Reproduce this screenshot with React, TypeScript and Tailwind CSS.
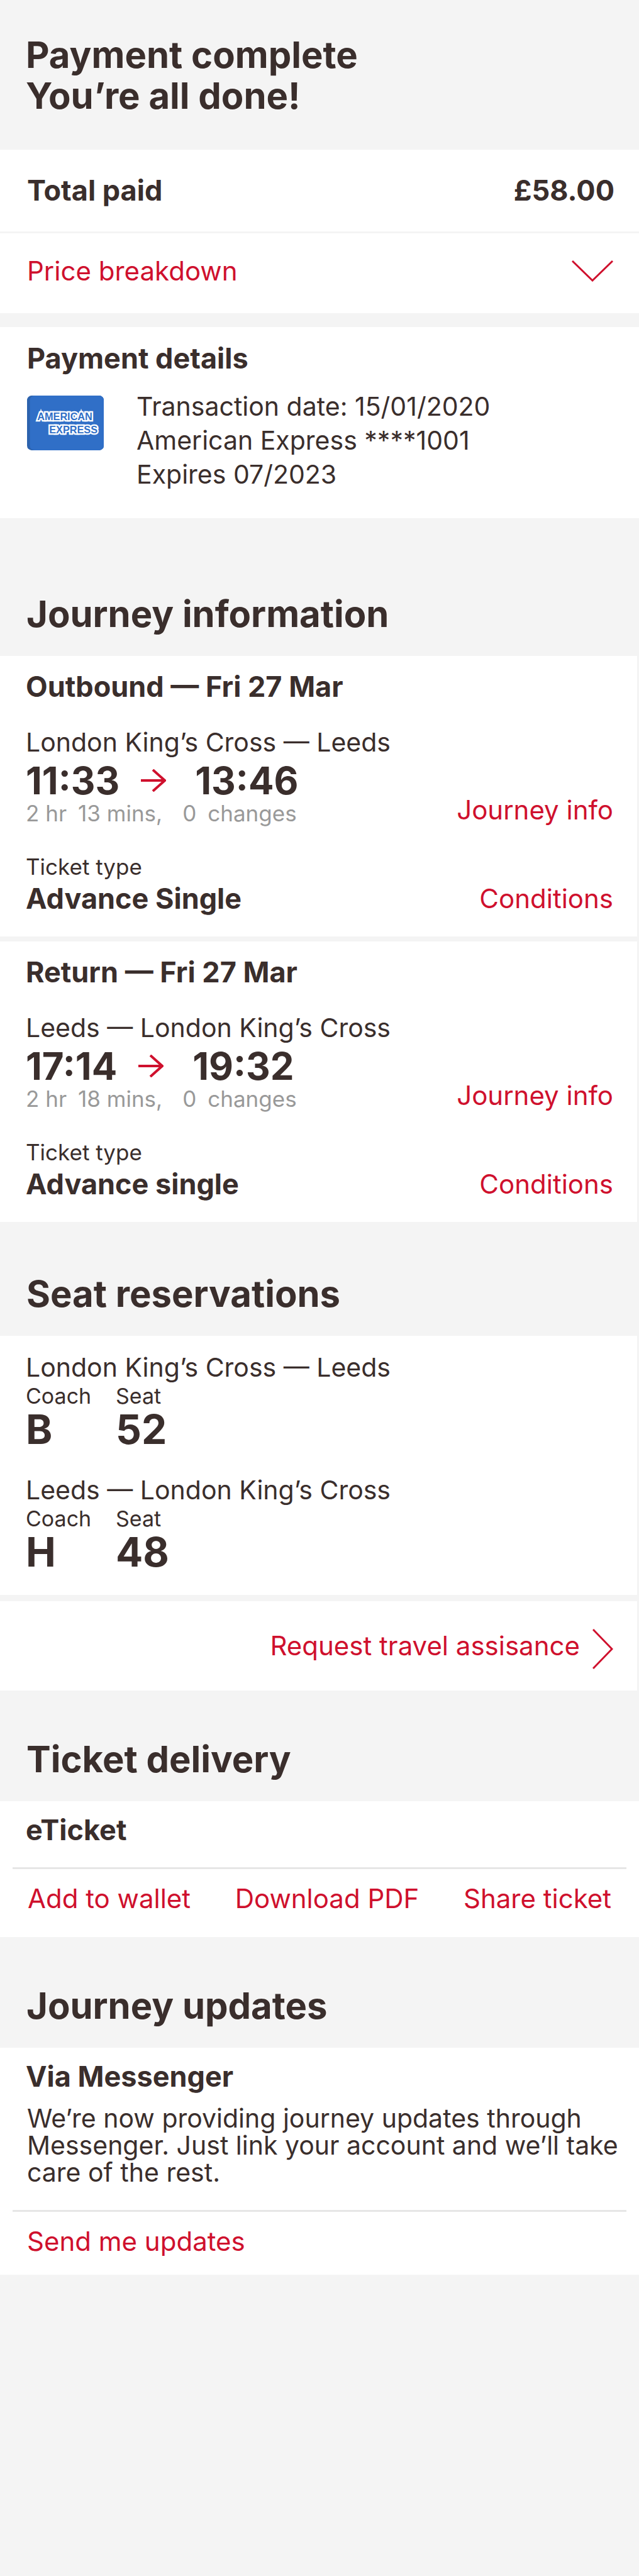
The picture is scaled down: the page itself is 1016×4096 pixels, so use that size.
import React, { useState } from "react";

const LINK = "text-[42px] leading-[54px] text-[#cf102d] whitespace-nowrap";
const BODY = "text-[41px] leading-[54px]";
const TITLE = "text-[45px] leading-[54px] font-bold";

function Heading({ children }: { children: React.ReactNode }) {
  return (
    <h2 className="px-[42px] pt-[77px] pb-[34px] text-[58px] leading-[65px] font-bold">{children}</h2>
  );
}

function AmexCard() {
  return (
    <svg className="mt-[10px] h-[87px] w-[122px] shrink-0" viewBox="0 0 135 96" role="img" aria-label="American Express">
      <rect width="135" height="96" rx="8" fill="#2c62ad" />
      <path d="M13 0H127a8 8 0 0 1 8 8V88a8 8 0 0 1-8 8H13a8 8 0 0 1-8-8V8a8 8 0 0 1 8-8z" fill="#306fc7" />
      <g
        fontFamily="'Liberation Sans', Arial, sans-serif"
        fontWeight="700"
        fontSize="18"
        fill="#306fc7"
        stroke="#fff"
        strokeWidth="5"
        paintOrder="stroke"
      >
        <text x="18" y="43">AMERICAN</text>
        <text x="39" y="66">EXPRESS</text>
      </g>
    </svg>
  );
}

function Arrow() {
  return (
    <svg className="h-[36px] w-[40px]" viewBox="0 0 40 36" fill="none" stroke="#cf102d" aria-label="to" role="img">
      <path d="M0 18H38" strokeWidth="4" />
      <path d="M19 1L38 18L19 35" strokeWidth="4" />
    </svg>
  );
}

type JourneyProps = {
  title: string;
  route: string;
  depart: string;
  arrive: string;
  minutes: string;
  ticket: string;
};

function Journey({ title, route, depart, arrive, minutes, ticket }: JourneyProps) {
  return (
    <article className="mr-[3px] bg-white pt-[22px] pr-[38px] pb-[33px] pl-[41px]">
      <h3 className={TITLE}>{title}</h3>
      <div className="mt-[34px] flex items-end justify-between">
        <div>
          <p className={BODY}>{route}</p>
          <div className="mt-1 flex items-center text-[60px] leading-[60px] font-bold">
            <span>{depart}</span>
            <span className="mr-[46px] ml-[34px]">
              <Arrow />
            </span>
            <span>{arrive}</span>
          </div>
          <p className="flex text-[35px] leading-[44px] text-[#999]">
            <span className="mr-[18px]">2 hr</span>
            <span className="mr-[32px]">{minutes} mins,</span>
            <span className="mr-[18px]">0</span>
            <span>changes</span>
          </p>
        </div>
        <a href="#journey" className={LINK}>Journey info</a>
      </div>
      <div className="mt-[41px] flex items-end justify-between">
        <div>
          <p className="text-[35px] leading-[44px]">Ticket type</p>
          <p className="mt-[2px] text-[45px] leading-[54px] font-bold">{ticket}</p>
        </div>
        <a href="#conditions" className={LINK}>Conditions</a>
      </div>
    </article>
  );
}

function Reservation({ route, coach, seat }: { route: string; coach: string; seat: string }) {
  return (
    <div>
      <p className="text-[41px] leading-[50px]">{route}</p>
      <dl className="flex">
        <div className="w-[143px]">
          <dt className="text-[34px] leading-[42px]">Coach</dt>
          <dd className="text-[64px] leading-[64px] font-bold">{coach}</dd>
        </div>
        <div>
          <dt className="text-[34px] leading-[42px]">Seat</dt>
          <dd className="text-[64px] leading-[64px] font-bold">{seat}</dd>
        </div>
      </dl>
    </div>
  );
}

export default function App() {
  const [open, setOpen] = useState(false);
  return (
    <main className="min-h-screen bg-[#f4f4f4] font-['Inter',sans-serif] text-[#3a2e2c] [font-optical-sizing:none]">
      <h1 className="px-[41px] pt-[55px] pb-[53px] text-[58px] leading-[65px] font-bold">
        Payment complete
        <br />
        You’re all done!
      </h1>

      <section>
        <div className="flex justify-between bg-white py-[38px] pr-[39px] pl-[43px] text-[45px] leading-[54px] font-bold">
          <span>Total paid</span>
          <span>£58.00</span>
        </div>
        <button
          type="button"
          aria-expanded={open}
          onClick={() => setOpen(!open)}
          className="mt-[3px] flex w-full items-center justify-between bg-white pt-[33px] pr-[41px] pb-[40px] pl-[43px]"
        >
          <span className={LINK}>Price breakdown</span>
          <svg className="h-[34px] w-[66px]" viewBox="0 0 66 34" fill="none" stroke="#cf102d" strokeWidth="3">
            <path d="M1 1L33 32L65 1" />
          </svg>
        </button>
      </section>

      <section className="mt-[22px] bg-white px-[43px] pt-[23px] pb-[43px]">
        <h2 className={TITLE}>Payment details</h2>
        <div className="mt-[22px] flex gap-[52px]">
          <AmexCard />
          <div className={BODY}>
            <p>Transaction date: 15/01/2020</p>
            <p>American Express ****1001</p>
            <p>Expires 07/2023</p>
          </div>
        </div>
      </section>

      <section className="pt-[43px]">
        <Heading>Journey information</Heading>
        <div className="flex flex-col gap-[8px]">
          <Journey title="Outbound — Fri 27 Mar" route="London King’s Cross — Leeds" depart="11:33" arrive="13:46" minutes="13" ticket="Advance Single" />
          <Journey title="Return — Fri 27 Mar" route="Leeds — London King’s Cross" depart="17:14" arrive="19:32" minutes="18" ticket="Advance single" />
        </div>
      </section>

      <section className="pt-[5px]">
        <Heading>Seat reservations</Heading>
        <div className="mr-[3px] flex flex-col gap-[39px] bg-white px-[41px] pt-[25px] pb-[36px]">
          <Reservation route="London King’s Cross — Leeds" coach="B" seat="52" />
          <Reservation route="Leeds — London King’s Cross" coach="H" seat="48" />
        </div>
        <a href="#assistance" className="mt-[10px] mr-[3px] flex justify-end gap-[20px] bg-white pt-[44px] pr-[38px] pb-[34px]">
          <span className={LINK}>Request travel assisance</span>
          <svg className="h-[64px] w-[33px]" viewBox="0 0 33 64" fill="none" stroke="#cf102d" strokeWidth="3">
            <path d="M1 1L31 32L1 63" />
          </svg>
        </a>
      </section>

      <section>
        <Heading>Ticket delivery</Heading>
        <div className="bg-white px-[20px] pt-[19px] pb-[34px]">
          <h3 className="px-[21px] text-[45px] leading-[54px] font-bold">eTicket</h3>
          <div className="mt-[32px] flex justify-between border-t-[3px] border-[#e6e6e6] px-[24px] pt-[20px]">
            <a href="#wallet" className={LINK}>Add to wallet</a>
            <a href="#pdf" className={LINK}>Download PDF</a>
            <a href="#share" className={LINK}>Share ticket</a>
          </div>
        </div>
      </section>

      <section>
        <Heading>Journey updates</Heading>
        <div className="bg-white px-[20px] pt-[19px] pb-[26px]">
          <h3 className="px-[21px] text-[45px] leading-[54px] font-bold">Via Messenger</h3>
          <p className="mt-[18px] pl-[23px] text-[41px] leading-[43px]">
            We’re now providing journey updates through
            <br />
            Messenger. Just link your account and we’ll take
            <br />
            care of the rest.
          </p>
          <div className="mt-[38px] border-t-[3px] border-[#e6e6e6] px-[23px] pt-[20px]">
            <button type="button" className={LINK}>Send me updates</button>
          </div>
        </div>
      </section>
    </main>
  );
}
